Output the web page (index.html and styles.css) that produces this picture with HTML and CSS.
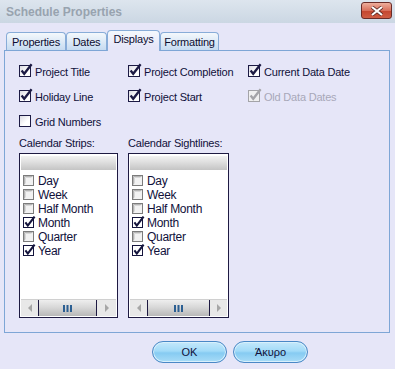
FILE: index.html
```html
<html>

<head>
    <link rel="stylesheet" href="styles.css">
</head>

<body>
    <svg class="defs" width="0" height="0">
        <defs>
            <linearGradient id="boxfill" x1="0" y1="0" x2="1" y2="1">
                <stop offset="0" stop-color="#d8d8e0"/>
                <stop offset="0.6" stop-color="#ffffff"/>
            </linearGradient>
            <symbol id="chk-on" viewBox="0 0 14 14">
                <rect x="0.5" y="2.5" width="11" height="11" fill="url(#boxfill)" stroke="#1c1a44"/>
                <path d="M2.6 7.6 L5.2 10.8 L12.6 1.2" fill="none" stroke="#1c1a44" stroke-width="2.3"/>
            </symbol>
            <symbol id="chk-off" viewBox="0 0 14 14">
                <rect x="0.5" y="2.5" width="11" height="11" fill="url(#boxfill)" stroke="#1c1a44"/>
            </symbol>
            <symbol id="chk-dis" viewBox="0 0 14 14">
                <rect x="0.5" y="2.5" width="11" height="11" fill="#f0f0f0" stroke="#a4a4a8"/>
                <path d="M2.6 7.6 L5.2 10.8 L12.6 1.2" fill="none" stroke="#a4a4a8" stroke-width="2.3"/>
            </symbol>
            <symbol id="item-off" viewBox="0 0 13 13">
                <rect x="0.5" y="1.5" width="10" height="10" fill="#f2f2f2" stroke="#7c7c7c"/>
                <path d="M1.5 10.5 V2.5 H9.5" fill="none" stroke="#b4b4b4"/>
                <path d="M2.5 9.5 V3.5 H8.5" fill="none" stroke="#d8d8d8"/>
            </symbol>
            <symbol id="item-on" viewBox="0 0 13 13">
                <rect x="0.5" y="1.5" width="10" height="10" fill="#ffffff" stroke="#14143c"/>
                <path d="M2.4 6.4 L4.8 9.6 L11.6 0.6" fill="none" stroke="#14143c" stroke-width="2.1"/>
            </symbol>
            <symbol id="grip" viewBox="0 0 9 7">
                <rect x="0" y="0" width="2" height="7" fill="#2c5f92"/>
                <rect x="3.5" y="0" width="2" height="7" fill="#2c5f92"/>
                <rect x="7" y="0" width="2" height="7" fill="#2c5f92"/>
            </symbol>
        </defs>
    </svg>

    <div class="window">
        <div class="titlebar">
            <span class="title">Schedule Properties</span>
            <button class="close" title="close">
                <svg width="14" height="10" viewBox="0 0 14 10">
                    <path d="M2 1 L12 9 M12 1 L2 9" stroke="#5a2a24" stroke-width="3.6"/>
                    <path d="M2 1 L12 9 M12 1 L2 9" stroke="#ffffff" stroke-width="2.2"/>
                </svg>
            </button>
        </div>

        <div class="tabs">
            <div class="tab t-props">Properties</div>
            <div class="tab t-dates">Dates</div>
            <div class="tab t-displays active">Displays</div>
            <div class="tab t-format">Formatting</div>
        </div>

        <div class="panel">
            <div class="options">
                <label class="opt"><svg class="cb"><use href="#chk-on"/></svg>Project Title</label>
                <label class="opt"><svg class="cb"><use href="#chk-on"/></svg>Project Completion</label>
                <label class="opt"><svg class="cb"><use href="#chk-on"/></svg>Current Data Date</label>
                <label class="opt"><svg class="cb"><use href="#chk-on"/></svg>Holiday Line</label>
                <label class="opt"><svg class="cb"><use href="#chk-on"/></svg>Project Start</label>
                <label class="opt disabled"><svg class="cb"><use href="#chk-dis"/></svg>Old Data Dates</label>
                <label class="opt"><svg class="cb"><use href="#chk-off"/></svg>Grid Numbers</label>
            </div>

            <div class="lists">
                <div class="list-col strips">
                    <div class="list-label">Calendar Strips:</div>
                    <div class="listbox">
                        <div class="list-head"></div>
                        <ul class="items">
                            <li><svg class="ib"><use href="#item-off"/></svg>Day</li>
                            <li><svg class="ib"><use href="#item-off"/></svg>Week</li>
                            <li><svg class="ib"><use href="#item-off"/></svg>Half Month</li>
                            <li><svg class="ib"><use href="#item-on"/></svg>Month</li>
                            <li><svg class="ib"><use href="#item-off"/></svg>Quarter</li>
                            <li><svg class="ib"><use href="#item-on"/></svg>Year</li>
                        </ul>
                        <div class="hscroll">
                            <span class="arrow left"></span>
                            <span class="thumb"><svg class="grip"><use href="#grip"/></svg></span>
                            <span class="arrow right"></span>
                        </div>
                    </div>
                </div>
                <div class="list-col sightlines">
                    <div class="list-label">Calendar Sightlines:</div>
                    <div class="listbox">
                        <div class="list-head"></div>
                        <ul class="items">
                            <li><svg class="ib"><use href="#item-off"/></svg>Day</li>
                            <li><svg class="ib"><use href="#item-off"/></svg>Week</li>
                            <li><svg class="ib"><use href="#item-off"/></svg>Half Month</li>
                            <li><svg class="ib"><use href="#item-on"/></svg>Month</li>
                            <li><svg class="ib"><use href="#item-off"/></svg>Quarter</li>
                            <li><svg class="ib"><use href="#item-on"/></svg>Year</li>
                        </ul>
                        <div class="hscroll">
                            <span class="arrow left"></span>
                            <span class="thumb"><svg class="grip"><use href="#grip"/></svg></span>
                            <span class="arrow right"></span>
                        </div>
                    </div>
                </div>
            </div>
        </div>

        <div class="buttons">
            <button class="btn">OK</button>
            <button class="btn">Άκυρο</button>
        </div>
    </div>
</body>

</html>
```

FILE: styles.css
```css
body {
    margin: 0;
    font-family: "Liberation Sans", Arial, sans-serif;
    font-size: 11px;
    letter-spacing: -0.2px;
    color: #10103a;
}

.defs {
    position: absolute;
}

.window {
    width: 395px;
    height: 369px;
    background: #e6e6f8;
    overflow: hidden;
}

.titlebar {
    height: 23px;
    display: flex;
    align-items: center;
    justify-content: space-between;
    padding: 0 3px 0 6px;
    background: linear-gradient(#dde5ee, #cbd7e3);
    box-sizing: border-box;
}

.title {
    font-weight: bold;
    font-size: 12px;
    letter-spacing: 0;
    color: #98a3af;
}

.close {
    width: 31px;
    height: 17px;
    margin-top: -2px;
    padding: 0;
    border: 1px solid #6a2c28;
    border-radius: 3px;
    background: linear-gradient(#eeae9c, #d8705c 50%, #c4452f 51%, #cf5d44);
    display: flex;
    align-items: center;
    justify-content: center;
}

.tabs {
    display: flex;
    align-items: flex-end;
    height: 20px;
    margin-top: 7px;
    padding-left: 6px;
    position: relative;
    z-index: 1;
}

.tab {
    height: 17px;
    box-sizing: content-box;
    border: 1px solid #88acd8;
    border-bottom: none;
    border-radius: 4px 4px 0 0;
    background: linear-gradient(#f4f8fc, #c6dbf1);
    line-height: 19px;
    text-align: center;
    color: #0c0c30;
}

.t-props {
    width: 58px;
}

.t-dates {
    width: 39px;
}

.t-displays {
    width: 51px;
}

.t-format {
    width: 57px;
}

.tab.active {
    height: 20px;
    margin-bottom: -1px;
    background: linear-gradient(#f4f8fd, #e6e6f8 80%);
    line-height: 16px;
}

.panel {
    height: 283px;
    margin: 0 5px 0 4px;
    border: 1px solid #7ea6d6;
    box-sizing: border-box;
    padding: 8px 0 0 14px;
}

.options {
    display: grid;
    grid-template-columns: 109px 120px auto;
    grid-auto-rows: 25px;
}

.opt {
    display: flex;
    align-items: center;
}

.opt.disabled {
    color: #a8a8b8;
}

.cb {
    width: 14px;
    height: 14px;
    margin: -3px 2px 0 0;
}

.lists {
    display: flex;
    gap: 10px;
    margin-top: 2px;
}

.list-col {
    display: flex;
    flex-direction: column;
}

.strips {
    width: 99px;
}

.sightlines {
    width: 101px;
}

.list-label {
    height: 17px;
    line-height: 14px;
    white-space: nowrap;
}

.listbox {
    height: 165px;
    border: 1px solid #1e1a42;
    background: #ffffff;
    box-sizing: border-box;
    display: flex;
    flex-direction: column;
}

.list-head {
    height: 14px;
    margin: 2px 1px 0;
    background: linear-gradient(#f2f2f2, #dcdcdc 50%, #c4c4c4);
}

.items {
    list-style: none;
    margin: 4px 0 0;
    padding: 0 0 0 3px;
}

.items li {
    height: 14px;
    display: flex;
    align-items: center;
    font-size: 12px;
    letter-spacing: -0.3px;
}

.ib {
    width: 13px;
    height: 13px;
    margin: -1px 2px 0 0;
}

.hscroll {
    margin: auto 1px 1px;
    height: 16px;
    display: flex;
    background: #e8e8e8;
    border-top: 1px solid #d0d0d0;
}

.arrow {
    width: 17px;
    display: flex;
    align-items: center;
    justify-content: center;
}

.arrow::before {
    content: "";
    border: 4px solid transparent;
}

.arrow.left::before {
    border-right-color: #a6a6a6;
    border-left: none;
}

.arrow.right::before {
    border-left-color: #a6a6a6;
    border-right: none;
}

.thumb {
    flex: 1;
    border-left: 1px solid #1e1a42;
    border-right: 1px solid #1e1a42;
    background: linear-gradient(#eeeeee, #d8d8d8 45%, #b8b8b8);
    display: flex;
    align-items: center;
    justify-content: center;
}

.grip {
    width: 9px;
    height: 7px;
}

.strips .arrow.right {
    width: 19px;
}

.buttons {
    display: flex;
    gap: 6px;
    padding: 8px 0 0 152px;
}

.btn {
    width: 75px;
    height: 22px;
    padding: 0;
    border: 1px solid #4a88c6;
    border-radius: 11px;
    background: linear-gradient(#c4e8fb, #a2dbf8 45%, #86cbf2 55%, #a8dcf7);
    font-family: "Liberation Sans", Arial, sans-serif;
    font-size: 11px;
    color: #10103a;
    box-shadow: inset 0 0 0 1px #d8f0fc;
}
```
